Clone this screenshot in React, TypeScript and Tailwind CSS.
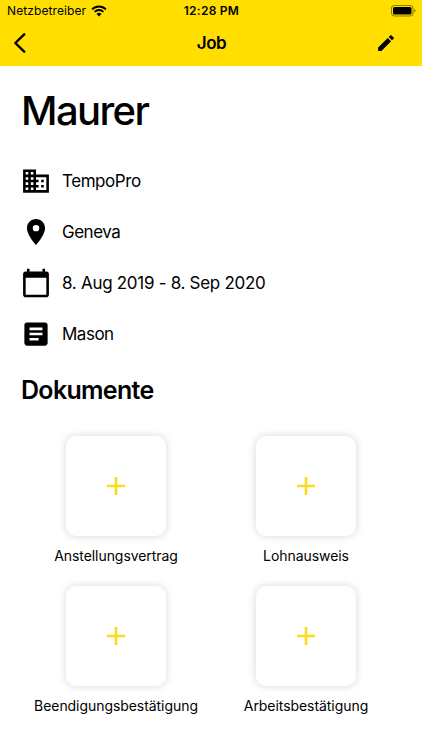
import React from "react";
import {
  MdArticle,
  MdBusiness,
  MdCalendarToday,
  MdEdit,
  MdLocationOn,
} from "react-icons/md";

const details = [
  { icon: MdBusiness, text: "TempoPro", tracking: "tracking-[-0.45px]" },
  { icon: MdLocationOn, text: "Geneva", tracking: "tracking-[-0.5px]" },
  {
    icon: MdCalendarToday,
    text: "8. Aug 2019 - 8. Sep 2020",
    tracking: "tracking-[-0.29px]",
  },
  { icon: MdArticle, text: "Mason", tracking: "tracking-[-0.5px]" },
];

const documents = [
  "Anstellungsvertrag",
  "Lohnausweis",
  "Beendigungsbestätigung",
  "Arbeitsbestätigung",
];

const StatusBar: React.FC = () => {
  return (
    <div className="grid grid-cols-3 items-center h-[22px] pl-[7px] pr-[6px]">
      <div className="flex items-center gap-[5px] text-[12px] tracking-[0.1px]">
        <span>Netzbetreiber</span>
        <svg width="16" height="12" viewBox="0 0 16 12" fill="none">
          <path
            d="M1.1 4.3a9.8 9.8 0 0 1 13.8 0M3.6 6.9a6.2 6.2 0 0 1 8.8 0"
            stroke="black"
            strokeWidth="1.9"
          />
          <path d="M8 11.5 5.5 8.9a3.6 3.6 0 0 1 5 0z" fill="black" />
        </svg>
      </div>
      <span className="text-center text-[12px] font-semibold tracking-[0.25px]">
        12:28 PM
      </span>
      <div className="flex justify-end">
        <svg width="25" height="12" viewBox="0 0 25 12" fill="none">
          <rect
            x="0.5"
            y="0.5"
            width="21.5"
            height="10.5"
            rx="2.8"
            stroke="black"
            strokeOpacity="0.45"
          />
          <rect x="2" y="2" width="18.5" height="7.5" rx="1.5" fill="black" />
          <path
            d="M23.3 4v3.6c.8-.3 1.2-1 1.2-1.8s-.4-1.5-1.2-1.8z"
            fill="black"
            fillOpacity="0.5"
          />
        </svg>
      </div>
    </div>
  );
};

const NavBar: React.FC = () => {
  return (
    <div className="grid grid-cols-3 items-center h-11 pl-[13px] pr-[25px] pb-0.5">
      <button aria-label="Zurück">
        <svg width="13" height="20" viewBox="0 0 13 20" fill="none">
          <path
            d="M11.2 1.3 2.3 10l8.9 8.7"
            stroke="black"
            strokeWidth="2.4"
            strokeLinecap="round"
            strokeLinejoin="round"
          />
        </svg>
      </button>
      <h1 className="text-center text-[17px] font-semibold tracking-[-0.4px] pl-[13px] pt-px">
        Job
      </h1>
      <button className="flex justify-end" aria-label="Bearbeiten">
        <MdEdit className="size-[22px] p-[0.5px]" />
      </button>
    </div>
  );
};

const DocumentCard: React.FC<{ label: string }> = ({ label }) => {
  return (
    <div className="flex flex-col items-center h-[150px]">
      <button
        className="flex items-center justify-center size-[100px] rounded-[10px] bg-white shadow-[0_0_8px_rgba(0,0,0,0.16)]"
        aria-label={label}
      >
        <svg width="18" height="19" viewBox="0 0 18 19" fill="none">
          <path d="M9 0v18M0 9h18" stroke="#fadb1e" strokeWidth="2.6" />
        </svg>
      </button>
      <span className="mt-[10px] text-[14px] leading-5 tracking-[-0.06px] whitespace-nowrap">
        {label}
      </span>
    </div>
  );
};

export default function App() {
  return (
    <div className="h-[750px] bg-white text-black overflow-hidden font-['Inter',sans-serif]">
      <header className="bg-[#ffde00]">
        <StatusBar />
        <NavBar />
      </header>

      <main className="px-[21px] pt-5">
        <h2 className="text-[40px] leading-[50px] font-[550] tracking-[-1.6px]">
          Maurer
        </h2>

        <ul className="mt-[19px]">
          {details.map(({ icon: Icon, text, tracking }) => (
            <li key={text} className="flex items-center h-[51px]">
              <Icon className="size-8 -ml-px p-[0.5px]" />
              <span className={`ml-2.5 pt-0.5 text-[17px] ${tracking}`}>
                {text}
              </span>
            </li>
          ))}
        </ul>

        <h3 className="mt-[15px] text-[25px] leading-8 font-semibold tracking-[-0.7px]">
          Dokumente
        </h3>

        <div className="mt-[30px] grid grid-cols-2">
          {documents.map((label) => (
            <DocumentCard key={label} label={label} />
          ))}
        </div>
      </main>
    </div>
  );
}
